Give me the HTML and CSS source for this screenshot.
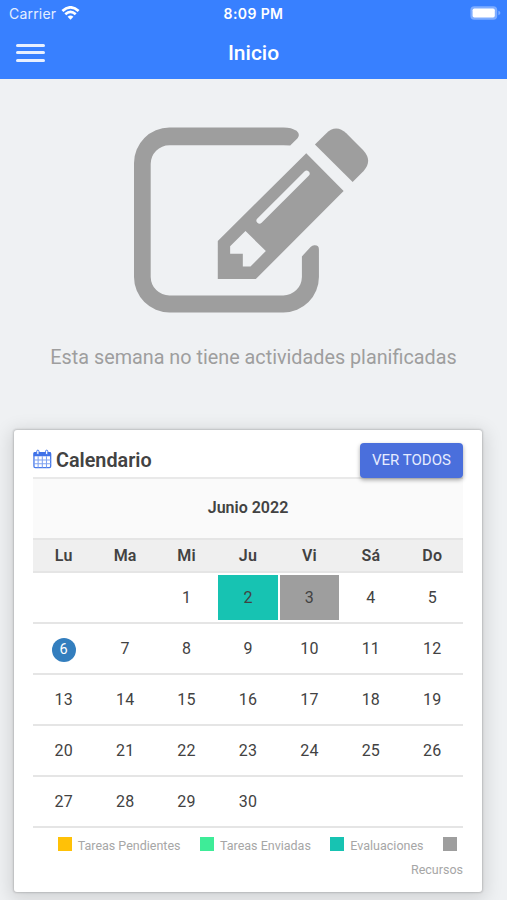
FILE: index.html
```html
<!DOCTYPE html>
<html lang="es">
<head>
	<meta charset="UTF-8">
	<title>Inicio</title>
	<meta name="viewport" content="width=device-width, initial-scale=1">
	<link rel="stylesheet" href="styles.css">
</head>
<body>
	<header class="header">
		<div class="status">
			<div class="carrier">
				<span>Carrier</span>
				<svg class="wifi" viewBox="0 0 18 14">
					<g fill="none" stroke="#fff" stroke-width="2.7">
						<path d="M.9 5.1Q9-2.4 17.1 5.1"/>
						<path d="M3.8 8.3Q9 3.5 14.2 8.3"/>
					</g>
					<path fill="#fff" d="M6.1 10.8Q9 8.2 11.9 10.8L9 13.7z"/>
				</svg>
			</div>
			<span class="time">8:09 PM</span>
			<svg class="battery" viewBox="0 0 31 14">
				<rect x=".4" y=".3" width="26.8" height="13.4" rx="4" fill="#7fadff"/>
				<rect x="2.6" y="2.4" width="22.2" height="9.2" rx="1.8" fill="#fff"/>
				<path d="M28.4 4.8q2 .6 2 2.2t-2 2.2z" fill="#7fadff"/>
			</svg>
		</div>
		<div class="navbar">
			<button type="button" class="btn-menu" aria-label="Menú"><i></i><i></i><i></i></button>
			<h1 class="title">Inicio</h1>
		</div>
	</header>

	<section class="empty">
		<svg class="empty-icon" viewBox="42 36 704 556" fill="#9e9e9e">
			<path d="M510 91L532 69Q541 58 529 47Q514 37 490 37H148A106 106 0 0 0 42 143V485A106 106 0 0 0 148 591H490A106 106 0 0 0 596 485V402Q596 390 584 390Q577 389 571 395L545 423V485A56 56 0 0 1 489 540H148A56 56 0 0 1 92 485V146A56 56 0 0 1 148 90H490Q502 90 510 91z"/>
			<path fill-rule="evenodd" d="M558 114L670 227L407 491H293V377zM376 347L330 393V415H368V453H391L437 407z"/>
			<path d="M418 316L559 175" stroke="#eff1f3" stroke-width="18" stroke-linecap="round"/>
			<path d="M584 88L616 56Q647 25 678 54L728 104Q758 136 730 167L697 200z"/>
		</svg>
		<p class="empty-text">Esta semana no tiene actividades planificadas</p>
	</section>

	<section class="card">
		<div class="card-head">
			<svg class="icon-cal" viewBox="0 0 20 20">
				<rect x="1" y="3.2" width="17.6" height="15.8" rx="1.4" fill="#fff" stroke="#4a7bea" stroke-width="1.4"/>
				<path d="M.6 3.6q0-1 1-1h16.2q1 0 1 1V7H.6z" fill="#3f72e8"/>
				<path d="M5.4 7v12M9.8 7v12M14.2 7v12M1 11h17.6M1 15h17.6" stroke="#7fa2f0" stroke-width="1.1"/>
				<rect x="3.9" y=".7" width="2.4" height="4.6" rx="1.2" fill="#fff" stroke="#3f72e8" stroke-width="1"/>
				<rect x="13.2" y=".7" width="2.4" height="4.6" rx="1.2" fill="#fff" stroke="#3f72e8" stroke-width="1"/>
			</svg>
			<h2 class="card-title">Calendario</h2>
			<button type="button" class="btn-all">VER TODOS</button>
		</div>
		<div class="month">Junio 2022</div>
		<div class="week week-head">
			<span>Lu</span><span>Ma</span><span>Mi</span><span>Ju</span><span>Vi</span><span>Sá</span><span>Do</span>
		</div>
		<div class="week">
			<span></span><span></span><span>1</span><span class="evaluacion">2</span><span class="recurso">3</span><span>4</span><span>5</span>
		</div>
		<div class="week">
			<span><b class="today">6</b></span><span>7</span><span>8</span><span>9</span><span>10</span><span>11</span><span>12</span>
		</div>
		<div class="week">
			<span>13</span><span>14</span><span>15</span><span>16</span><span>17</span><span>18</span><span>19</span>
		</div>
		<div class="week">
			<span>20</span><span>21</span><span>22</span><span>23</span><span>24</span><span>25</span><span>26</span>
		</div>
		<div class="week">
			<span>27</span><span>28</span><span>29</span><span>30</span><span></span><span></span><span></span>
		</div>
		<div class="legend">
			<i class="dot dot-pend"></i><span>Tareas Pendientes</span>
			<i class="dot dot-env"></i><span>Tareas Enviadas</span>
			<i class="dot dot-eval"></i><span>Evaluaciones</span>
			<i class="dot dot-rec"></i>
			<span class="legend-last">Recursos</span>
		</div>
	</section>
</body>
</html>
```
FILE: styles.css
```css
* { box-sizing: border-box; }
body { margin: 0; height: 900px; overflow: hidden; background: #eff1f3; color: #424242; font-family: Roboto, sans-serif; }
h1, h2, p { margin: 0; }
button { border: none; padding: 0; font-family: inherit; cursor: pointer; }
svg { display: block; }

/* header */
.header { height: 79px; background: #3880ff; color: #fff; }
.status { display: grid; grid-template-columns: 1fr auto 1fr; align-items: center; height: 27px; padding: 0 6px 0 9px; font-family: Inter, sans-serif; font-size: 14px; }
.carrier { display: flex; align-items: center; gap: 5px; color: #e4eeff; letter-spacing: 0.2px; }
.wifi { width: 19px; height: 14px; margin-top: -2px; }
.time { margin-right: 3px; font-weight: 600; font-size: 14px; letter-spacing: 0.4px; }
.battery { width: 31px; height: 14px; margin-top: -1px; justify-self: end; }
.navbar { display: grid; grid-template-columns: 1fr auto 1fr; align-items: center; height: 51px; padding: 0 16px; }
.btn-menu { display: flex; flex-direction: column; gap: 4.5px; width: 29px; background: none; }
.btn-menu i { height: 3px; border-radius: 2px; background: #e8f0ff; }
.title { font-size: 21px; font-weight: 500; }

/* sin actividades */
.empty { display: flex; flex-direction: column; align-items: center; height: 351px; padding-top: 48px; }
.empty-icon { width: 235px; height: 186px; margin-right: 5px; }
.empty-text { margin-top: 33px; color: #9e9e9e; font-size: 19.8px; line-height: 24px; white-space: nowrap; }

/* calendario */
.card { width: 468px; height: 462px; margin-left: 14px; padding: 0 19px; border-radius: 3px; background: #fff; box-shadow: 0 0 2px 1px rgba(0,0,0,0.16), 0 4px 18px 4px rgba(0,0,0,0.12); }
.card-head { display: flex; align-items: center; height: 47px; padding-top: 12px; }
.icon-cal { width: 19px; height: 20px; margin-top: -1px; }
.card-title { margin: 2px 0 0 4px; font-size: 19.8px; font-weight: 600; }
.btn-all { position: relative; top: 1px; width: 103px; height: 35px; margin-left: auto; padding-bottom: 1px; border-radius: 4px; background: #4a6fdc; color: #e6ecff; font-size: 15px; box-shadow: 0 2px 4px rgba(0,0,0,0.35); }
.month { height: 61px; border-top: 2px solid #e9e9e9; background: #fafafa; font-size: 16px; font-weight: 600; line-height: 57px; text-align: center; }
.week { display: grid; grid-template-columns: repeat(7, 1fr); height: 51px; padding: 2px 0; border-bottom: 2px solid #e5e5e5; }
.week span { display: flex; align-items: center; justify-content: center; margin: 0 1px; font-size: 16px; letter-spacing: 0.2px; }
.week-head { height: 35px; padding: 0; border-top: 2px solid #e5e5e5; background: #efefef; }
.week-head span { font-weight: 600; }
.week .evaluacion { background: #17c3b2; }
.week .recurso { background: #9e9e9e; }
.today { width: 24px; height: 24px; margin-top: 3px; border-radius: 50%; background: #337ebe; color: #fff; font-size: 14.5px; font-weight: 400; line-height: 24px; text-align: center; }
.legend { display: flex; flex-wrap: wrap; align-items: center; justify-content: flex-end; padding-top: 6px; color: #a6a6a6; font-size: 12.5px; line-height: 24px; }
.dot { width: 14px; height: 14px; margin: 0 6px 4px 19.5px; }
.dot-pend { background: #ffc107; }
.dot-env { background: #3eec98; }
.dot-eval { background: #17c3b2; }
.dot-rec { background: #9e9e9e; }
.legend-last { width: 100%; text-align: right; }
```
